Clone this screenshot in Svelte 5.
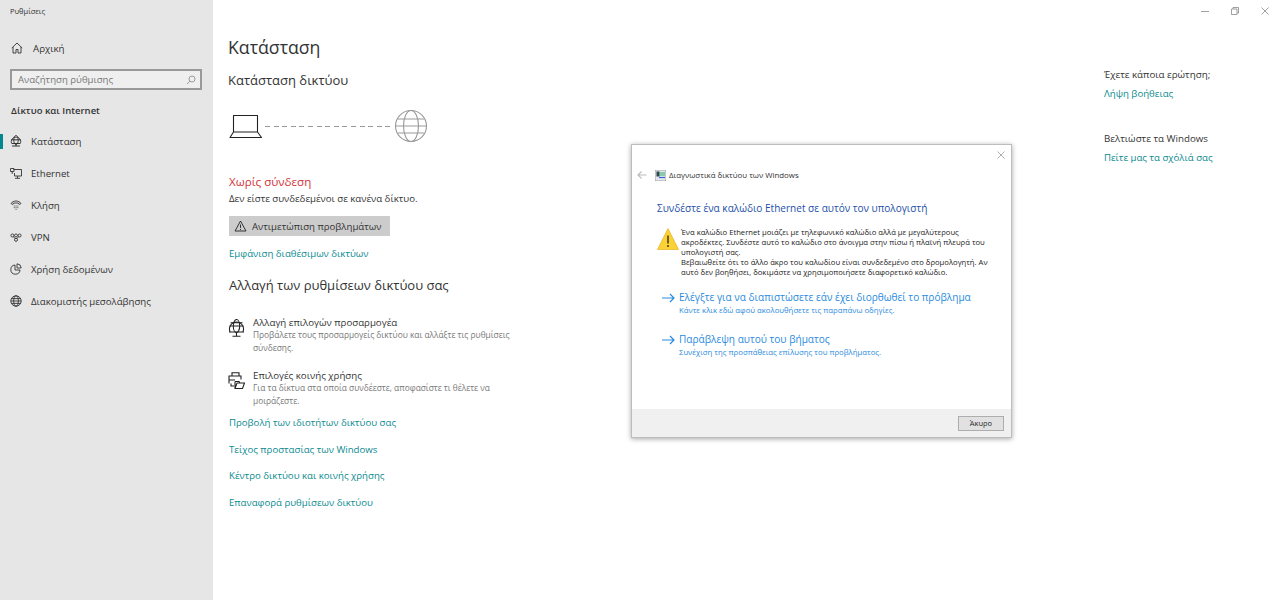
<script>
  const navItems = [
    { label: 'Κατάσταση', icon: 'status', active: true },
    { label: 'Ethernet', icon: 'ethernet' },
    { label: 'Κλήση', icon: 'dial' },
    { label: 'VPN', icon: 'vpn' },
    { label: 'Χρήση δεδομένων', icon: 'data' },
    { label: 'Διακομιστής μεσολάβησης', icon: 'proxy' }
  ];
  const links = [
    'Προβολή των ιδιοτήτων δικτύου σας',
    'Τείχος προστασίας των Windows',
    'Κέντρο δικτύου και κοινής χρήσης',
    'Επαναφορά ρυθμίσεων δικτύου'
  ];
</script>

<div class="window">
  <aside class="sidebar">
    <div class="app-title">Ρυθμίσεις</div>
    <div class="home">
      <svg width="12" height="12" viewBox="0 0 12 12" fill="none" stroke="#333" stroke-width="0.9"><path d="M0.8 6 6 1l5.200 5M2 5v6h3V7.500h2V11h3V5"/></svg>
      <span>Αρχική</span>
    </div>
    <div class="search">
      <span>Αναζήτηση ρύθμισης</span>
      <svg width="10" height="10" viewBox="0 0 10 10" fill="none" stroke="#888" stroke-width="0.8"><circle cx="6" cy="4" r="3"/><path d="M3.800 6.200 1 9"/></svg>
    </div>
    <div class="section-title">Δίκτυο και Internet</div>
    <nav>
      {#each navItems as item}
        <div class="nav-item" class:active={item.active}>
          <svg width="12" height="12" viewBox="0 0 12 12" fill="none" stroke="#333" stroke-width="0.9">
            {#if item.icon === 'status'}
              <path d="M1.500 8.500A4.800 4.800 0 1 1 10.500 8.500"/><ellipse cx="6" cy="5" rx="2.200" ry="4.400"/><path d="M1.200 4.800h9.600M2 8.500h8M2 11h8M6 8.500V11" stroke-width="1"/>
            {:else if item.icon === 'ethernet'}
              <path d="M3.500 2.500h8v6.500H4.500V6M7.500 9v2M5 11.300h5"/><path d="M0.500 1.500h3.500v3H0.500zM2.200 4.500V7"/>
            {:else if item.icon === 'dial'}
              <path d="M1 4.500C3 1.200 9 1.200 11 4.500L9.200 5.500 8.300 4H3.700L2.800 5.500z"/><path d="M3.800 7h.9M5.600 7h.9M7.400 7h.9M3.800 8.700h.9M5.600 8.700h.9M7.400 8.700h.9M5.600 10.400h.9"/>
            {:else if item.icon === 'vpn'}
              <circle cx="2.400" cy="4.500" r="1.500"/><circle cx="6" cy="4.500" r="1.500"/><circle cx="9.600" cy="4.500" r="1.500"/><circle cx="6" cy="8.800" r="1.500"/><path d="M3.500 5.700 5 7.600M8.500 5.700 7 7.600"/>
            {:else if item.icon === 'data'}
              <path d="M5 2a4.600 4.600 0 1 0 5 5H5z"/><path d="M7 0.800a4.400 4.400 0 0 1 4.200 4.200H7z"/>
            {:else}
              <circle cx="6" cy="6" r="5.200"/><ellipse cx="6" cy="6" rx="2.300" ry="5.200"/><path d="M0.800 6h10.400M1.600 3.600h8.800M1.600 8.400h8.800"/>
            {/if}
          </svg>
          <span>{item.label}</span>
        </div>
      {/each}
    </nav>
  </aside>

  <main class="content">
    <h1>Κατάσταση</h1>
    <h2 class="status-title">Κατάσταση δικτύου</h2>

    <div class="diagram">
      <svg width="34" height="26" viewBox="0 0 34 26" fill="none" stroke="#222" stroke-width="1.100"><path d="M4.500 19V2.500h24V19M1 24.500h31.500L28.500 19h-24z" stroke-linejoin="round"/></svg>
      <div class="dashes"></div>
      <svg width="34" height="34" viewBox="0 0 34 34" fill="none" stroke="#999" stroke-width="1.100"><circle cx="17" cy="17" r="15.500"/><ellipse cx="17" cy="17" rx="7.500" ry="15.500"/><path d="M1.500 17h31M3.500 10h27M3.500 24h27"/></svg>
    </div>

    <div class="no-conn">Χωρίς σύνδεση</div>
    <p class="no-conn-sub">Δεν είστε συνδεδεμένοι σε κανένα δίκτυο.</p>
    <div class="trouble">
      <svg width="13" height="12" viewBox="0 0 13 12" fill="none" stroke="#222" stroke-width="0.9"><path d="M6.500 1 12 11H1zM6.500 4.500v3.500M6.500 9v1"/></svg>
      <span>Αντιμετώπιση προβλημάτων</span>
    </div>
    <div class="link show-nets">Εμφάνιση διαθέσιμων δικτύων</div>

    <h2 class="change-title">Αλλαγή των ρυθμίσεων δικτύου σας</h2>

    <div class="option">
      <svg width="17" height="18" viewBox="0 0 17 18" fill="none" stroke="#222" stroke-width="1.100"><path d="M2.200 13A7 7 0 1 1 14.800 13"/><ellipse cx="8.500" cy="7" rx="3.200" ry="6.500"/><path d="M1.500 7h14M2.500 3.800h12M1 13h15M8.500 13v4M4.500 17.200h8"/></svg>
      <div>
        <div class="opt-title">Αλλαγή επιλογών προσαρμογέα</div>
        <div class="opt-sub">Προβάλετε τους προσαρμογείς δικτύου και αλλάξτε τις ρυθμίσεις σύνδεσης.</div>
      </div>
    </div>
    <div class="option second">
      <svg width="17" height="18" viewBox="0 0 17 18" fill="none" stroke="#222" stroke-width="1.100"><path d="M4 4V0.800h7V4M1 11.500V4h12v3.500M1 8h6M3 11.500v2.500h3M7 9.500V16.500h7.500L16.500 11H9L7 16.500M7 9.500h4l1 1.500"/></svg>
      <div>
        <div class="opt-title">Επιλογές κοινής χρήσης</div>
        <div class="opt-sub">Για τα δίκτυα στα οποία συνδέεστε, αποφασίστε τι θέλετε να μοιράζεστε.</div>
      </div>
    </div>

    <div class="links">
      {#each links as link}
        <div class="link">{link}</div>
      {/each}
    </div>
  </main>

  <aside class="help">
    <div class="window-controls">
      <svg width="8" height="8" viewBox="0 0 8 8" stroke="#888" stroke-width="0.8" fill="none"><path d="M0 4.500h8"/></svg>
      <svg width="8" height="8" viewBox="0 0 8 8" stroke="#888" stroke-width="0.8" fill="none"><path d="M0.500 2h5.500v5.500h-5.500zM2 2V0.500h5.500V6H6"/></svg>
      <svg width="8" height="8" viewBox="0 0 8 8" stroke="#888" stroke-width="0.8" fill="none"><path d="M0.500 0.500l7 7M7.500 0.500l-7 7"/></svg>
    </div>
    <div class="help-label">Έχετε κάποια ερώτηση;</div>
    <div class="link">Λήψη βοήθειας</div>
    <div class="help-label second">Βελτιώστε τα Windows</div>
    <div class="link">Πείτε μας τα σχόλιά σας</div>
  </aside>

  <div class="dialog">
    <div class="dlg-close">
      <svg width="8" height="8" viewBox="0 0 8 8" stroke="#999" stroke-width="0.8" fill="none"><path d="M0.500 0.500l7 7M7.500 0.500l-7 7"/></svg>
    </div>
    <div class="dlg-nav">
      <svg class="back" width="10" height="8" viewBox="0 0 10 8" stroke="#bbb" stroke-width="1.100" fill="none"><path d="M9.500 4H1M4.500 0.500 1 4l3.500 3.500"/></svg>
      <svg width="11" height="11" viewBox="0 0 11 11"><rect width="11" height="11" fill="#e4e8ee" stroke="#777" stroke-width="0.6"/><rect x="1.500" y="1.500" width="3" height="5" fill="#345"/><path d="M4 3h6M4 5h6" stroke="#3a6" stroke-width="1.200"/><path d="M4 7.500h6" stroke="#36c" stroke-width="1.200"/></svg>
      <span>Διαγνωστικά δικτύου των Windows</span>
    </div>
    <div class="dlg-head">Συνδέστε ένα καλώδιο Ethernet σε αυτόν τον υπολογιστή</div>
    <div class="dlg-warn">
      <svg width="22" height="22" viewBox="0 0 22 22"><path d="M11 0.500 21.500 21.500H0.500z" fill="#fbd133" stroke="#e3a90f" stroke-width="0.600"/><path d="M11 7.500v8M11 17v2" stroke="#222" stroke-width="1.300"/></svg>
      <p>Ένα καλώδιο Ethernet μοιάζει με τηλεφωνικό καλώδιο αλλά με μεγαλύτερους ακροδέκτες. Συνδέστε αυτό το καλώδιο στο άνοιγμα στην πίσω ή πλαϊνή πλευρά του υπολογιστή σας.<br />Βεβαιωθείτε ότι το άλλο άκρο του καλωδίου είναι συνδεδεμένο στο δρομολογητή. Αν αυτό δεν βοηθήσει, δοκιμάστε να χρησιμοποιήσετε διαφορετικό καλώδιο.</p>
    </div>
    <div class="dlg-action first">
      <svg width="13" height="10" viewBox="0 0 13 10" stroke="#2a8be0" stroke-width="1.200" fill="none"><path d="M0 5h12M8 1l4 4-4 4"/></svg>
      <div>
        <div class="act-title">Ελέγξτε για να διαπιστώσετε εάν έχει διορθωθεί το πρόβλημα</div>
        <div class="act-sub">Κάντε κλικ εδώ αφού ακολουθήσετε τις παραπάνω οδηγίες.</div>
      </div>
    </div>
    <div class="dlg-action">
      <svg width="13" height="10" viewBox="0 0 13 10" stroke="#2a8be0" stroke-width="1.200" fill="none"><path d="M0 5h12M8 1l4 4-4 4"/></svg>
      <div>
        <div class="act-title">Παράβλεψη αυτού του βήματος</div>
        <div class="act-sub">Συνέχιση της προσπάθειας επίλυσης του προβλήματος.</div>
      </div>
    </div>
    <div class="dlg-footer">
      <button>Άκυρο</button>
    </div>
  </div>
</div>

<style>
  :global(body) {
    margin: 0;
    background: #fff;
    font-family: "Open Sans", "Noto Sans", sans-serif;
    color: #333;
  }
  .window {
    display: grid;
    grid-template-columns: 213px 1fr 176px;
    height: 600px;
    overflow: hidden;
    position: relative;
  }

  .sidebar {
    background: #e6e6e6;
    padding-left: 11px;
    display: flex;
    flex-direction: column;
  }
  .app-title {
    font-size: 7.500px;
    line-height: 10px;
    margin-top: 6px;
    margin-left: -1px;
  }
  .home {
    display: flex;
    align-items: center;
    gap: 10px;
    font-size: 9.700px;
    margin-top: 25px;
    height: 14px;
  }
  .search {
    margin-top: 14px;
    margin-left: -1px;
    height: 17px;
    border: 2px solid #999;
    background: #efefef;
    display: flex;
    align-items: center;
    justify-content: space-between;
    padding: 0 4px 0 6px;
    box-sizing: content-box;
    width: 178px;
    font-size: 9.600px;
    color: #777;
  }
  .section-title {
    font-size: 9.500px;
    font-weight: 600;
    margin-top: 14px;
    height: 14px;
    line-height: 14px;
  }
  nav {
    margin-top: 7px;
    margin-left: -11px;
  }
  .nav-item {
    display: flex;
    align-items: center;
    gap: 9px;
    height: 32px;
    padding-left: 10px;
    font-size: 9.650px;
    position: relative;
  }
  .nav-item.active::before {
    content: '';
    position: absolute;
    left: 0;
    top: 9px;
    width: 3px;
    height: 15px;
    background: #01888f;
  }

  .content {
    padding-left: 15px;
    display: flex;
    flex-direction: column;
    align-items: flex-start;
  }
  h1 {
    font-size: 17.700px;
    font-weight: 400;
    margin: 34px 0 0;
    line-height: 26px;
  }
  h2 {
    font-weight: 400;
    margin: 0;
    font-size: 13px;
    line-height: 20px;
  }
  .status-title {
    margin-top: 10px;
  }
  .diagram {
    margin-top: 19px;
    margin-left: 1px;
    display: flex;
    align-items: center;
    height: 34px;
  }
  .diagram .dashes {
    width: 125px;
    height: 1px;
    margin: 0 4px 0 2px;
    background: repeating-linear-gradient(90deg, #999 0 5px, transparent 5px 8.600px);
  }
  .no-conn {
    color: #d13438;
    font-size: 11.600px;
    line-height: 16px;
    margin: 31px 0 0 1px;
  }
  .no-conn-sub {
    font-size: 9.630px;
    line-height: 14px;
    margin: 2px 0 0 1px;
  }
  .trouble {
    margin: 10px 0 0 1px;
    background: #ccc;
    height: 20px;
    width: 161px;
    display: flex;
    align-items: center;
    gap: 5px;
    padding-left: 5px;
    box-sizing: border-box;
    font-size: 9.650px;
  }
  .link {
    color: #0a8a90;
    font-size: 9.650px;
    line-height: 14px;
  }
  .show-nets {
    margin: 11px 0 0 1px;
  }
  .change-title {
    margin: 14px 0 0 1px;
  }
  .option {
    display: flex;
    gap: 8px;
    margin: 21px 0 0 0;
    width: 290px;
  }
  .option.second {
    margin-top: 15px;
  }
  .option svg {
    flex: none;
    margin-top: 3px;
  }
  .opt-title {
    font-size: 9.700px;
    line-height: 13px;
  }
  .opt-sub {
    font-size: 8.350px;
    line-height: 12.500px;
    color: #777;
  }
  .links {
    margin: 9px 0 0 1px;
    display: flex;
    flex-direction: column;
    gap: 12.600px;
  }

  .help {
    position: relative;
    padding-top: 68px;
  }
  .window-controls {
    position: absolute;
    top: 7px;
    right: 11px;
    display: flex;
    gap: 22px;
  }
  .help-label {
    font-size: 9.750px;
    line-height: 14px;
    margin-bottom: 5px;
  }
  .help-label.second {
    margin-top: 31px;
  }

  .dialog {
    position: absolute;
    left: 631px;
    top: 144px;
    width: 379px;
    height: 292px;
    background: #fff;
    border: 1px solid #bdbdbd;
    box-shadow: 0 1px 5px rgba(0, 0, 0, 0.35);
    display: flex;
    flex-direction: column;
    font-size: 8px;
  }
  .dlg-close {
    position: absolute;
    top: 6px;
    right: 6px;
    line-height: 0;
  }
  .dlg-nav {
    display: flex;
    align-items: center;
    margin: 24px 0 0 5px;
    height: 12px;
    font-size: 7.860px;
    gap: 3px;
  }
  .back {
    margin-right: 5px;
  }
  .dlg-head {
    color: #1e50a8;
    font-size: 10.050px;
    line-height: 14px;
    margin: 20px 0 0 25px;
  }
  .dlg-warn {
    display: flex;
    gap: 2px;
    margin: 12px 0 0 25px;
  }
  .dlg-warn svg {
    flex: none;
    margin-top: 1px;
  }
  .dlg-warn p {
    margin: 0;
    width: 312px;
    font-size: 7.670px;
    line-height: 10px;
    color: #222;
  }
  .dlg-action {
    display: flex;
    gap: 4px;
    margin: 16px 0 0 30px;
    color: #2a8be0;
  }
  .dlg-action.first {
    margin-top: 13px;
  }
  .dlg-action svg {
    margin-top: 3px;
    flex: none;
  }
  .act-title {
    font-size: 10.080px;
    line-height: 14px;
  }
  .act-sub {
    font-size: 7.750px;
    line-height: 12px;
  }
  .dlg-footer {
    margin-top: auto;
    height: 28px;
    background: #f0f0f0;
    display: flex;
    align-items: center;
    justify-content: flex-end;
    padding-right: 7px;
  }
  button {
    width: 46px;
    height: 15px;
    padding: 0;
    border: 1px solid #adadad;
    background: #e1e1e1;
    font: inherit;
    font-size: 7.500px;
    color: #222;
  }
</style>
